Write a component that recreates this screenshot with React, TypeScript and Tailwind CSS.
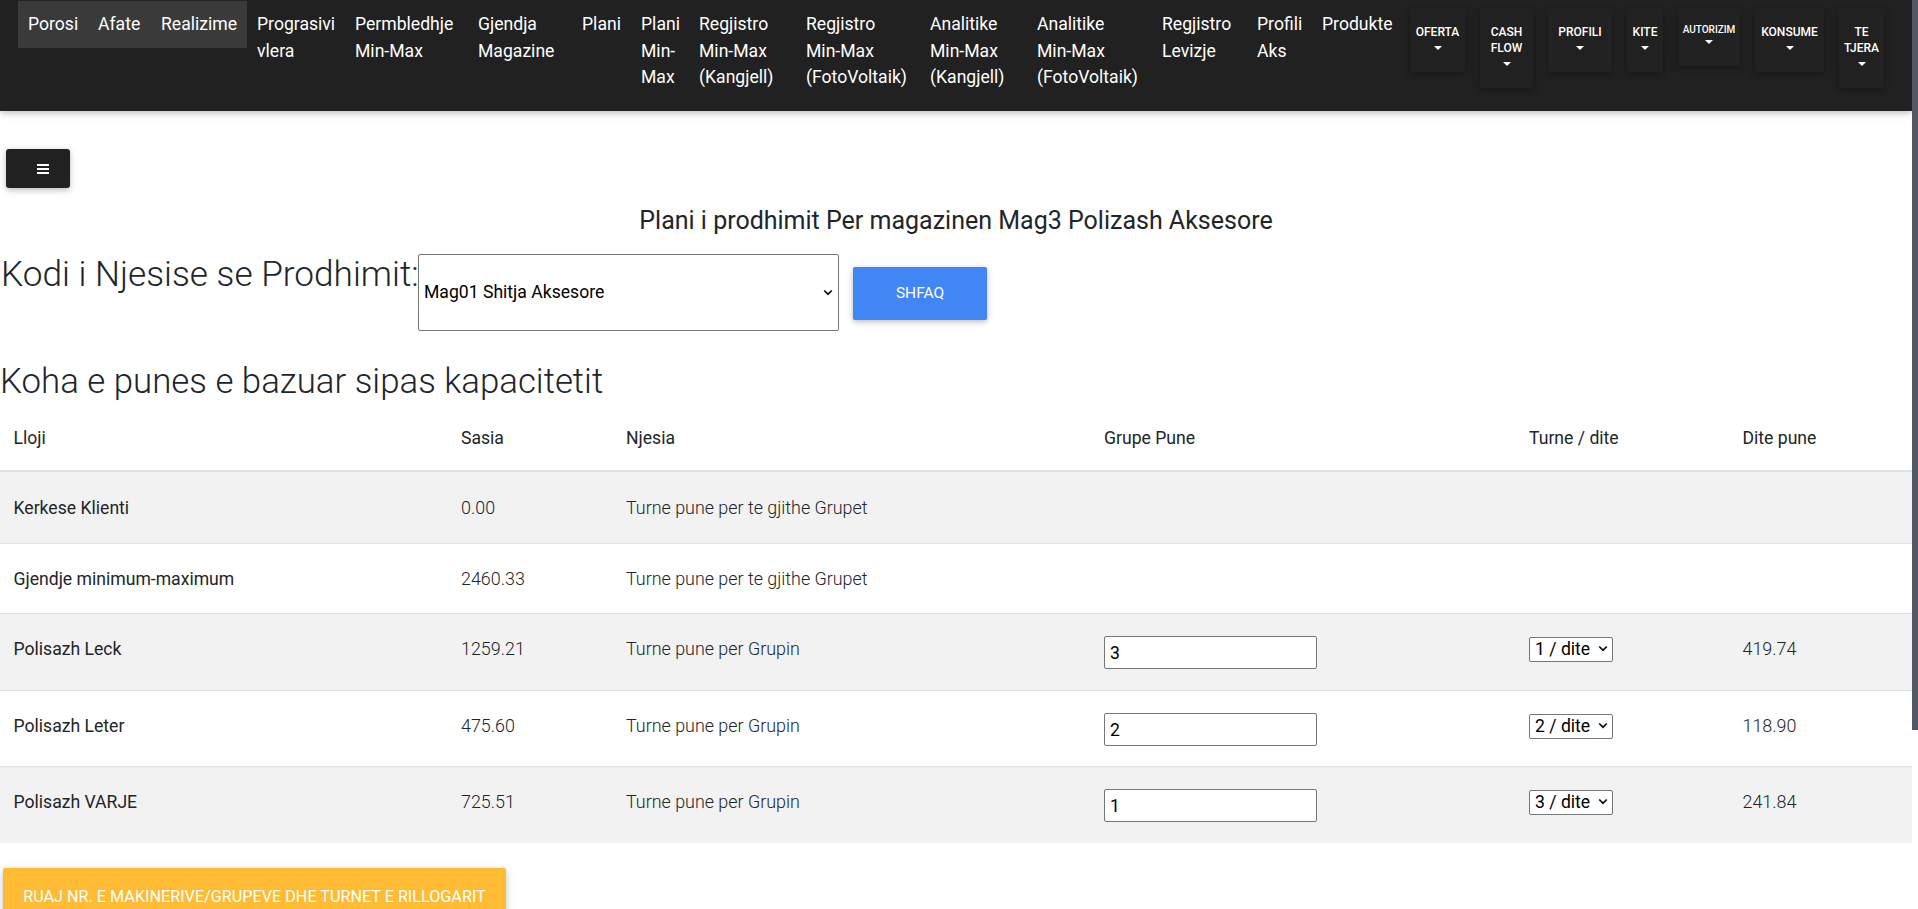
import React from "react";

type NavItem = { cls: string; lines: string[] };

const highlighted: NavItem[] = [
  { cls: "w-[70px]", lines: ["Porosi"] },
  { cls: "w-[63px]", lines: ["Afate"] },
  { cls: "w-[96px]", lines: ["Realizime"] },
];

const navItems: NavItem[] = [
  { cls: "w-[98px]", lines: ["Prograsivi", "vlera"] },
  { cls: "w-[123px]", lines: ["Permbledhje", "Min-Max"] },
  { cls: "w-[104px]", lines: ["Gjendja", "Magazine"] },
  { cls: "w-[59px]", lines: ["Plani"] },
  { cls: "w-[58px]", lines: ["Plani", "Min-", "Max"] },
  { cls: "w-[107px]", lines: ["Regjistro", "Min-Max", "(Kangjell)"] },
  { cls: "w-[124px]", lines: ["Regjistro", "Min-Max", "(FotoVoltaik)"] },
  { cls: "w-[107px]", lines: ["Analitike", "Min-Max", "(Kangjell)"] },
  { cls: "w-[125px]", lines: ["Analitike", "Min-Max", "(FotoVoltaik)"] },
  { cls: "w-[95px]", lines: ["Regjistro", "Levizje"] },
  { cls: "w-[65px]", lines: ["Profili", "Aks"] },
  { cls: "w-[90px]", lines: ["Produkte"] },
];

type Drop = { cls: string; lines: string[]; small?: boolean };
const drops: Drop[] = [
  { cls: "w-[55px]", lines: ["OFERTA"] },
  { cls: "w-[53px]", lines: ["CASH", "FLOW"] },
  { cls: "w-[64px]", lines: ["PROFILI"] },
  { cls: "w-[36px]", lines: ["KITE"] },
  { cls: "w-[62px]", lines: ["AUTORIZIM"], small: true },
  { cls: "w-[69px]", lines: ["KONSUME"] },
  { cls: "w-[45px]", lines: ["TE", "TJERA"] },
];

function NavLink({ item }: { item: NavItem }) {
  return (
    <div className={`${item.cls} shrink-0 whitespace-nowrap pl-[10px] pt-[10px] text-[17.6px] leading-[26.7px]`}>
      {item.lines.map((l, i) => (
        <div key={i}>{l}</div>
      ))}
    </div>
  );
}

function Caret({ small }: { small?: boolean }) {
  return (
    <div className={small ? "flex h-[12px] items-center justify-center" : "flex h-[16px] items-center justify-center"}>
      <span className="h-0 w-0 border-x-[4px] border-t-[4px] border-x-transparent border-t-white" />
    </div>
  );
}

function Chevron() {
  return (
    <svg width="10" height="7" viewBox="0 0 10 7" fill="none">
      <path d="M1.2 1.5 L5 5.2 L8.8 1.5" stroke="#111" strokeWidth="1.7" />
    </svg>
  );
}

function SmallSelect({ value }: { value: string }) {
  return (
    <div className="relative h-[25px] w-[84px]">
      <select
        defaultValue={value}
        className="h-[25px] w-[84px] appearance-none rounded-[2px] border border-[#767676] bg-white pl-[5px] text-[17.6px] leading-[22px] text-black font-['Roboto',sans-serif]"
      >
        <option>1 / dite</option>
        <option>2 / dite</option>
        <option>3 / dite</option>
      </select>
      <div className="pointer-events-none absolute right-[5px] top-[9px]">
        <Chevron />
      </div>
    </div>
  );
}

function NumInput({ value }: { value: string }) {
  return (
    <input
      defaultValue={value}
      className="h-[33px] w-[213px] rounded-[2px] border border-[#767676] bg-white pl-[5px] text-[17.6px] text-black font-['Roboto',sans-serif]"
    />
  );
}

const cols = "grid grid-cols-[447.5px_165px_478px_425px_213.5px_1fr]";

const zShadow = "shadow-[0_2px_5px_0_rgba(0,0,0,0.16),0_2px_10px_0_rgba(0,0,0,0.12)]";

export default function App() {
  return (
    <div className="flex h-[909px] w-full overflow-hidden bg-white font-['Roboto',sans-serif] text-[#212529]">
      <div className="min-w-0 flex-1">
        {/* NAVBAR */}
        <nav className="flex h-[111px] items-start bg-[#212121] pl-[18px] pt-[1px] text-white shadow-[0_2px_5px_0_rgba(0,0,0,0.16),0_2px_10px_0_rgba(0,0,0,0.12)]">
          <div className="flex h-[47px] shrink-0 bg-[#3a3a3a]">
            {highlighted.map((it, i) => (
              <NavLink key={i} item={it} />
            ))}
          </div>
          {navItems.map((it, i) => (
            <NavLink key={i} item={it} />
          ))}
          <div className="ml-auto flex shrink-0 items-start gap-[15px] pr-[28px] pt-[7px]">
            {drops.map((d, i) => (
              <div
                key={i}
                className={
                  d.small
                    ? `${d.cls} flex flex-col items-center bg-[#212121] pb-[18px] pt-[16px] text-[10px] font-medium leading-[12px] ${zShadow}`
                    : `${d.cls} flex flex-col items-center bg-[#212121] pb-[16px] pt-[16px] text-[12px] font-medium leading-[16px] ${zShadow}`
                }
              >
                {d.lines.map((l, j) => (
                  <div key={j} className="whitespace-nowrap">
                    {l}
                  </div>
                ))}
                <Caret small={d.small} />
              </div>
            ))}
          </div>
        </nav>

        {/* Hamburger */}
        <div className="pl-[6px] pt-[38px]">
          <button className={`flex h-[39px] w-[64px] items-center rounded-[3px] bg-[#212121] pl-[31px] ${zShadow}`}>
            <div className="flex flex-col gap-[2px]">
              <span className="block h-[2px] w-[12px] bg-white" />
              <span className="block h-[2px] w-[12px] bg-white" />
              <span className="block h-[2px] w-[12px] bg-white" />
            </div>
          </button>
        </div>

        <h2 className="mt-[18px] text-center text-[25px] leading-[30px] text-[#212529]">
          Plani i prodhimit Per magazinen Mag3 Polizash Aksesore
        </h2>

        <div className="mt-[15px] flex items-start">
          <label className="w-[418px] shrink-0 whitespace-nowrap pl-[1px] pt-[3px] text-[35.2px] font-light leading-[40px]">
            Kodi i Njesise se Prodhimit:
          </label>
          <div className="relative mt-[3px] h-[77px] w-[421px] shrink-0">
            <select
              defaultValue="Mag01 Shitja Aksesore"
              className="h-[77px] w-[421px] appearance-none rounded-[2px] border border-[#767676] bg-white pl-[5px] text-[17.6px] text-black font-['Roboto',sans-serif]"
            >
              <option>Mag01 Shitja Aksesore</option>
            </select>
            <div className="pointer-events-none absolute right-[6px] top-[35px]">
              <Chevron />
            </div>
          </div>
          <button
            className={`ml-[14px] mt-[16px] h-[53px] w-[134px] shrink-0 rounded-[2px] bg-[#4285f4] text-[15.5px] uppercase text-white ${zShadow}`}
          >
            SHFAQ
          </button>
        </div>

        <h3 className="mt-[30px] text-[34.8px] font-light leading-[40px]">Koha e punes e bazuar sipas kapacitetit</h3>

        {/* TABLE */}
        <div className="mt-[4px] text-[17.6px] leading-[26.4px]">
          <div className={`${cols} h-[67px] border-b-2 border-[#dee2e6] pt-[20px]`}>
            <div className="px-[13.5px]">Lloji</div>
            <div className="px-[13.5px]">Sasia</div>
            <div className="px-[13.5px]">Njesia</div>
            <div className="px-[13.5px]">Grupe Pune</div>
            <div className="px-[13.5px]">Turne / dite</div>
            <div className="px-[13.5px]">Dite pune</div>
          </div>

          <div className={`${cols} h-[71px] items-start bg-[#f2f2f2] pt-[23px]`}>
            <div className="px-[13.5px]">Kerkese Klienti</div>
            <div className="px-[13.5px] text-[17.9px] font-light">0.00</div>
            <div className="px-[13.5px] text-[17.9px] font-light">Turne pune per te gjithe Grupet</div>
            <div />
            <div />
            <div />
          </div>

          <div className={`${cols} h-[70px] items-start border-t border-[#dee2e6] bg-white pt-[22px]`}>
            <div className="px-[13.5px]">Gjendje minimum-maximum</div>
            <div className="px-[13.5px] text-[17.9px] font-light">2460.33</div>
            <div className="px-[13.5px] text-[17.9px] font-light">Turne pune per te gjithe Grupet</div>
            <div />
            <div />
            <div />
          </div>

          <div className={`${cols} h-[77px] items-start border-t border-[#dee2e6] bg-[#f2f2f2] pt-[22px]`}>
            <div className="px-[13.5px]">Polisazh Leck</div>
            <div className="px-[13.5px] text-[17.9px] font-light">1259.21</div>
            <div className="px-[13.5px] text-[17.9px] font-light">Turne pune per Grupin</div>
            <div className="px-[13.5px]">
              <NumInput value="3" />
            </div>
            <div className="px-[13.5px]">
              <SmallSelect value="1 / dite" />
            </div>
            <div className="px-[13.5px] text-[17.9px] font-light">419.74</div>
          </div>

          <div className={`${cols} h-[76px] items-start border-t border-[#dee2e6] bg-white pt-[22px]`}>
            <div className="px-[13.5px]">Polisazh Leter</div>
            <div className="px-[13.5px] text-[17.9px] font-light">475.60</div>
            <div className="px-[13.5px] text-[17.9px] font-light">Turne pune per Grupin</div>
            <div className="px-[13.5px]">
              <NumInput value="2" />
            </div>
            <div className="px-[13.5px]">
              <SmallSelect value="2 / dite" />
            </div>
            <div className="px-[13.5px] text-[17.9px] font-light">118.90</div>
          </div>

          <div className={`${cols} h-[77px] items-start border-t border-[#dee2e6] bg-[#f2f2f2] pt-[22px]`}>
            <div className="px-[13.5px]">Polisazh VARJE</div>
            <div className="px-[13.5px] text-[17.9px] font-light">725.51</div>
            <div className="px-[13.5px] text-[17.9px] font-light">Turne pune per Grupin</div>
            <div className="px-[13.5px]">
              <NumInput value="1" />
            </div>
            <div className="px-[13.5px]">
              <SmallSelect value="3 / dite" />
            </div>
            <div className="px-[13.5px] text-[17.9px] font-light">241.84</div>
          </div>
        </div>

        <button
          className={`ml-[3px] mt-[25px] h-[59px] w-[503px] rounded-[2px] bg-[#ffbb33] text-[16.2px] uppercase text-white ${zShadow}`}
        >
          RUAJ NR. E MAKINERIVE/GRUPEVE DHE TURNET E RILLOGARIT
        </button>
      </div>

      {/* scrollbar */}
      <div className="w-[6px] shrink-0 bg-white">
        <div className="h-[730px] w-[6px] bg-[#525866]" />
      </div>
    </div>
  );
}
